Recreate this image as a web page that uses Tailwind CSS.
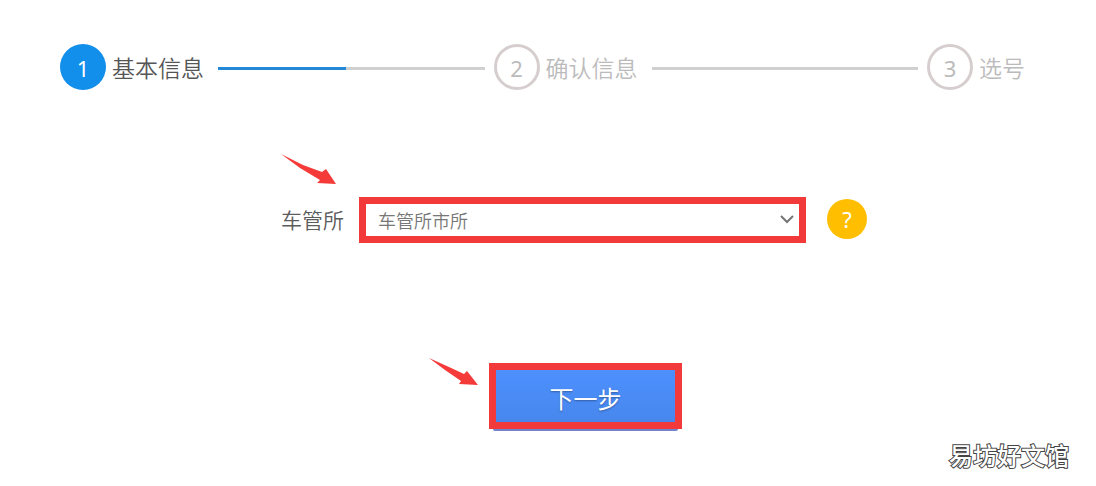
<!DOCTYPE html>
<html lang="zh-CN">
<head>
<meta charset="utf-8">
<meta name="viewport" content="width=device-width, initial-scale=1">
<title>基本信息</title>
<script src="https://cdn.jsdelivr.net/npm/@tailwindcss/browser@4"></script>
</head>
<body class="min-h-screen bg-white font-['Noto_Sans_CJK_SC',sans-serif] font-[350] text-[#5c5c5c]">
<main class="flex min-h-screen flex-col">
  <ol class="flex items-center pt-11 pr-[71px] pl-[60px] text-[23px] leading-[46px] text-[#bbb]">
    <li class="flex flex-1 items-center text-[#555]" aria-current="step">
      <span class="flex size-[46px] shrink-0 items-center justify-center rounded-full bg-[#128eeb] pt-0.5 font-['Noto_Sans',sans-serif] text-[22px] font-normal text-white">1</span>
      <span class="ml-1.5 whitespace-nowrap">基本信息</span>
      <span class="mt-0.5 mr-[9px] ml-3.5 flex h-[3px] flex-1 bg-[#d0d0d0]"><span class="w-[48%] bg-[#2389d7]"></span></span>
    </li>
    <li class="flex flex-1 items-center">
      <span class="flex size-[46px] shrink-0 items-center justify-center rounded-full border-3 border-[#d6cece] pt-0.5 font-['Noto_Sans',sans-serif] text-[22px] font-normal">2</span>
      <span class="ml-1.5 whitespace-nowrap">确认信息</span>
      <span class="mt-0.5 mr-[9px] ml-3.5 h-[3px] flex-1 bg-[#d0d0d0]"></span>
    </li>
    <li class="flex items-center">
      <span class="flex size-[46px] shrink-0 items-center justify-center rounded-full border-3 border-[#d6cece] pt-0.5 font-['Noto_Sans',sans-serif] text-[22px] font-normal">3</span>
      <span class="ml-1.5 whitespace-nowrap">选号</span>
    </li>
  </ol>

  <form class="flex flex-col" onsubmit="return false">
    <div class="mt-[107px] flex items-center justify-center pl-[52px]">
      <div class="relative mr-[15px]">
        <label for="office" class="block pb-0.5 text-[21px] leading-11 whitespace-nowrap">车管所</label>
        <svg class="absolute bottom-full left-0 mb-3 h-[31px] w-14" viewBox="0 0 56 31" fill="#f53a3a" aria-hidden="true"><path d="M0 0 L22 11 L41 18 L45 15 L55 30 L36 29 L39 26 L19 14 Z"/></svg>
      </div>
      <div class="relative w-[447px]">
        <select id="office" class="block h-[46px] w-full appearance-none border-7 border-[#f23a3a] bg-white pl-3 text-[18px] leading-8 text-[#777] outline-none">
          <option>车管所市所</option>
        </select>
        <svg class="pointer-events-none absolute top-[18px] right-3 h-[9px] w-3.5" viewBox="0 0 14 9" fill="none" stroke="#757575" stroke-width="2" aria-hidden="true"><path d="M1 1 L7 7 L13 1"/></svg>
      </div>
      <button type="button" aria-label="帮助" class="mb-0.5 ml-[21px] flex size-10 items-center justify-center rounded-full bg-[#ffbf00] font-['Noto_Sans',sans-serif] text-[22px] font-normal text-white">?</button>
    </div>
    <div class="mt-[120px] flex justify-center pl-[75px]">
      <div class="relative">
        <svg class="absolute right-full bottom-full mr-[10px] -mb-[23px] h-7 w-[50px]" viewBox="0 0 50 28" fill="#f53a3a" aria-hidden="true"><path d="M0 0 L20 9 L35 16 L38 13 L49 27 L30 26 L32 23 L16 12 Z"/></svg>
        <button type="submit" class="h-[66px] w-[193px] border-7 border-[#f23a3a] bg-linear-to-b from-[#4d90fe] to-[#4787ed] pt-1 text-[24px] font-normal text-white text-shadow-[0_1px_2px_#0005]">下一步</button>
        <span class="mx-1 block h-0.5 rounded-b-sm bg-[#7384cf]"></span>
      </div>
    </div>
  </form>
  <p class="mt-auto self-end pr-[27px] pb-[13px] text-[24px] leading-9 font-medium text-white [-webkit-text-stroke:2px_#444] [paint-order:stroke_fill]">易坊好文馆</p>
</main>
</body>
</html>
